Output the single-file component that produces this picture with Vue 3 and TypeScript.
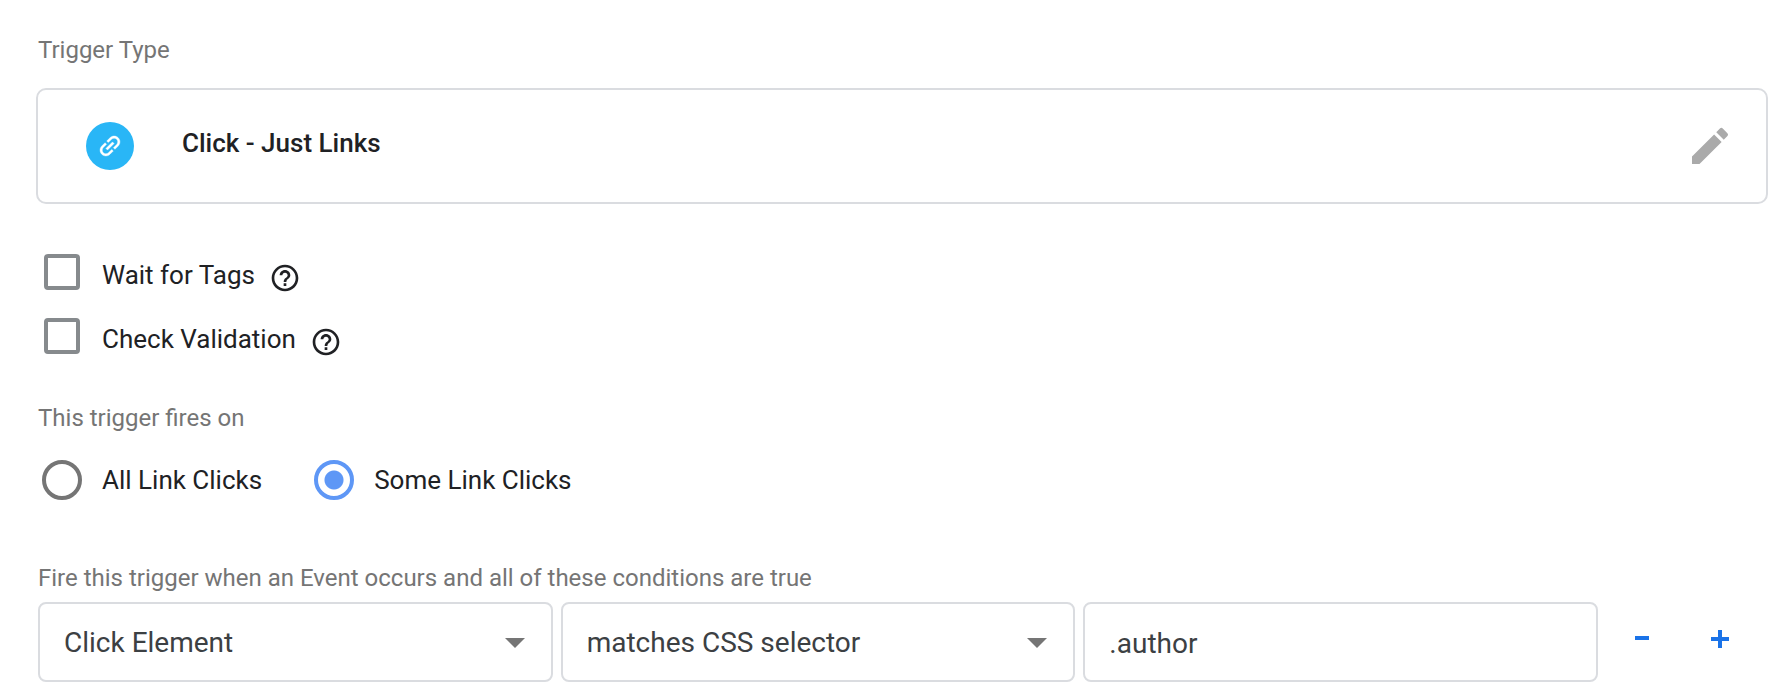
<script setup lang="ts">
import { ref } from 'vue'

interface Option {
  id: string
  label: string
  checked: boolean
}

const options = ref<Option[]>([
  { id: 'wait-for-tags', label: 'Wait for Tags', checked: false },
  { id: 'check-validation', label: 'Check Validation', checked: false },
])

const scopes = [
  { id: 'all', label: 'All Link Clicks' },
  { id: 'some', label: 'Some Link Clicks' },
]
const scope = ref('some')

const variable = ref('Click Element')
const operator = ref('matches CSS selector')
const value = ref('.author')
</script>

<template>
  <main class="trigger">
    <h2 class="caption">Trigger Type</h2>
    <section class="card">
      <span class="badge">
        <svg viewBox="0 0 24 24" width="28" height="28" aria-hidden="true">
          <path
            transform="rotate(-45 12 12)"
            fill="#fff"
            stroke="#fff"
            stroke-width="0.3"
            d="M3.9 12c0-1.71 1.39-3.1 3.1-3.1h4V7H7c-2.76 0-5 2.24-5 5s2.24 5 5 5h4v-1.9H7c-1.71 0-3.1-1.39-3.1-3.1zM8 13h8v-2H8v2zm9-6h-4v1.9h4c1.71 0 3.1 1.39 3.1 3.1s-1.39 3.1-3.1 3.1h-4V17h4c2.76 0 5-2.24 5-5s-2.24-5-5-5z"
          />
        </svg>
      </span>
      <h1 class="title">Click - Just Links</h1>
      <button class="edit" type="button" aria-label="Edit">
        <svg viewBox="0 0 24 24" width="48" height="48" aria-hidden="true">
          <path
            fill="#aaa"
            d="M3 17.25V21h3.75L17.81 9.94l-3.75-3.75L3 17.25zM20.71 7.04a.996.996 0 0 0 0-1.41l-2.34-2.34a.996.996 0 0 0-1.41 0l-1.83 1.83 3.75 3.75 1.83-1.83z"
          />
        </svg>
      </button>
    </section>

    <div class="options">
      <div v-for="option in options" :key="option.id" class="option">
        <input :id="option.id" v-model="option.checked" class="box" type="checkbox" />
        <label :for="option.id" class="text">{{ option.label }}</label>
        <button class="help" type="button" :aria-label="'Help: ' + option.label">
          <svg viewBox="0 0 24 24" width="32" height="32" aria-hidden="true">
            <path
              fill="#202124"
              d="M11 18h2v-2h-2v2zm1-16C6.48 2 2 6.48 2 12s4.480 10 10 10 10-4.480 10-10S17.520 2 12 2zm0 18c-4.410 0-8-3.590-8-8s3.590-8 8-8 8 3.590 8 8-3.590 8-8 8zm0-14c-2.210 0-4 1.790-4 4h2c0-1.100.9-2 2-2s2 .9 2 2c0 2-3 1.750-3 5h2c0-2.250 3-2.500 3-5 0-2.210-1.790-4-4-4z"
            />
          </svg>
        </button>
      </div>
    </div>

    <fieldset class="group">
      <legend class="caption">This trigger fires on</legend>
      <div class="radios">
        <div v-for="item in scopes" :key="item.id" class="choice">
          <input :id="item.id" v-model="scope" class="radio" type="radio" name="scope" :value="item.id" />
          <label :for="item.id" class="text">{{ item.label }}</label>
        </div>
      </div>
    </fieldset>

    <fieldset class="group conditions">
      <legend class="caption">Fire this trigger when an Event occurs and all of these conditions are true</legend>
      <div class="condition">
        <div class="picker">
          <select v-model="variable" class="field" aria-label="Variable">
            <option>Click Element</option>
          </select>
          <svg class="arrow" viewBox="0 0 20 10" width="20" height="10" aria-hidden="true">
            <path fill="#757575" d="M0 0h20L10 10z" />
          </svg>
        </div>
        <div class="picker">
          <select v-model="operator" class="field" aria-label="Operator">
            <option>matches CSS selector</option>
          </select>
          <svg class="arrow" viewBox="0 0 20 10" width="20" height="10" aria-hidden="true">
            <path fill="#757575" d="M0 0h20L10 10z" />
          </svg>
        </div>
        <input v-model="value" class="field" type="text" aria-label="Value" />
        <div class="actions">
          <button class="action" type="button" aria-label="Remove condition">
            <svg viewBox="0 0 24 24" width="24" height="24" aria-hidden="true">
              <path fill="#1a73e8" d="M5 9h14v4H5z" />
            </svg>
          </button>
          <button class="action" type="button" aria-label="Add condition">
            <svg viewBox="0 0 24 24" width="24" height="24" aria-hidden="true">
              <path fill="#1a73e8" d="M10 3h4v7h7v4h-7v7h-4v-7H3v-4h7z" />
            </svg>
          </button>
        </div>
      </div>
    </fieldset>
  </main>
</template>

<style>
body {
  margin: 0;
  background: #fff;
}
</style>

<style scoped>
.trigger {
  box-sizing: border-box;
  padding: 34px 12px 18px 36px;
  font-family: Roboto, sans-serif;
  color: #202124;
}
.caption {
  margin: 0;
  padding: 0 2px;
  font-size: 24px;
  font-weight: 400;
  line-height: 32px;
  color: #757575;
}
.card {
  display: flex;
  align-items: center;
  box-sizing: border-box;
  min-height: 116px;
  margin-top: 22px;
  padding: 0 32px 0 48px;
  border: 2px solid #dadce0;
  border-radius: 10px;
}
.badge {
  display: flex;
  align-items: center;
  justify-content: center;
  width: 48px;
  height: 48px;
  border-radius: 50%;
  background: #29b6f6;
}
.title {
  flex: 1;
  margin: 0 0 6px 48px;
  font-size: 26px;
  font-weight: 500;
  line-height: 32px;
}
button {
  padding: 0;
  border: 0;
  background: none;
  font-family: inherit;
  cursor: pointer;
}
.edit svg,
.help svg,
.action svg {
  display: block;
}
.options {
  display: grid;
  gap: 24px;
  margin-top: 48px;
  padding-left: 8px;
}
.option,
.choice {
  display: flex;
  align-items: center;
}
.option {
  height: 40px;
}
.box,
.radio {
  appearance: none;
  box-sizing: border-box;
  margin: 0;
  border: 4px solid #868a8d;
  background: #fff;
}
.box {
  width: 36px;
  height: 36px;
  border-radius: 4px;
}
.box:checked {
  background: #5e97f6;
  border-color: #5e97f6;
}
.text {
  font-size: 26px;
  line-height: 32px;
}
.option .text {
  margin: 6px 14px 0 22px;
}
.help {
  margin-top: 12px;
}
.group {
  min-width: 0;
  margin: 46px 0 0;
  padding: 0;
  border: 0;
}
.radios {
  display: flex;
  gap: 52px;
  padding: 26px 6px 0;
}
.choice {
  gap: 20px;
}
.radio {
  width: 40px;
  height: 40px;
  border-color: #757575;
  border-radius: 50%;
}
.radio:checked {
  border-color: #5e97f6;
  background: radial-gradient(circle, #5e97f6 0 9px, #fff 10px);
}
.conditions {
  margin-top: 62px;
}
.condition {
  display: grid;
  grid-template-columns: repeat(3, 1fr) 162px;
  gap: 8px;
  padding-left: 2px;
  margin-top: 8px;
}
.picker {
  display: grid;
  align-items: center;
}
.picker > * {
  grid-area: 1 / 1;
}
.arrow {
  justify-self: end;
  margin: 2px 28px 0 0;
  pointer-events: none;
}
.field {
  appearance: none;
  box-sizing: border-box;
  width: 100%;
  height: 80px;
  margin: 0;
  padding: 2px 24px 0;
  border: 2px solid #dadce0;
  border-radius: 8px;
  background: #fff;
  font-family: inherit;
  font-size: 28px;
  line-height: 36px;
  color: #3c4043;
}
.actions {
  display: flex;
  justify-content: space-between;
  align-items: center;
  padding: 0 36px 6px 24px;
}
</style>
